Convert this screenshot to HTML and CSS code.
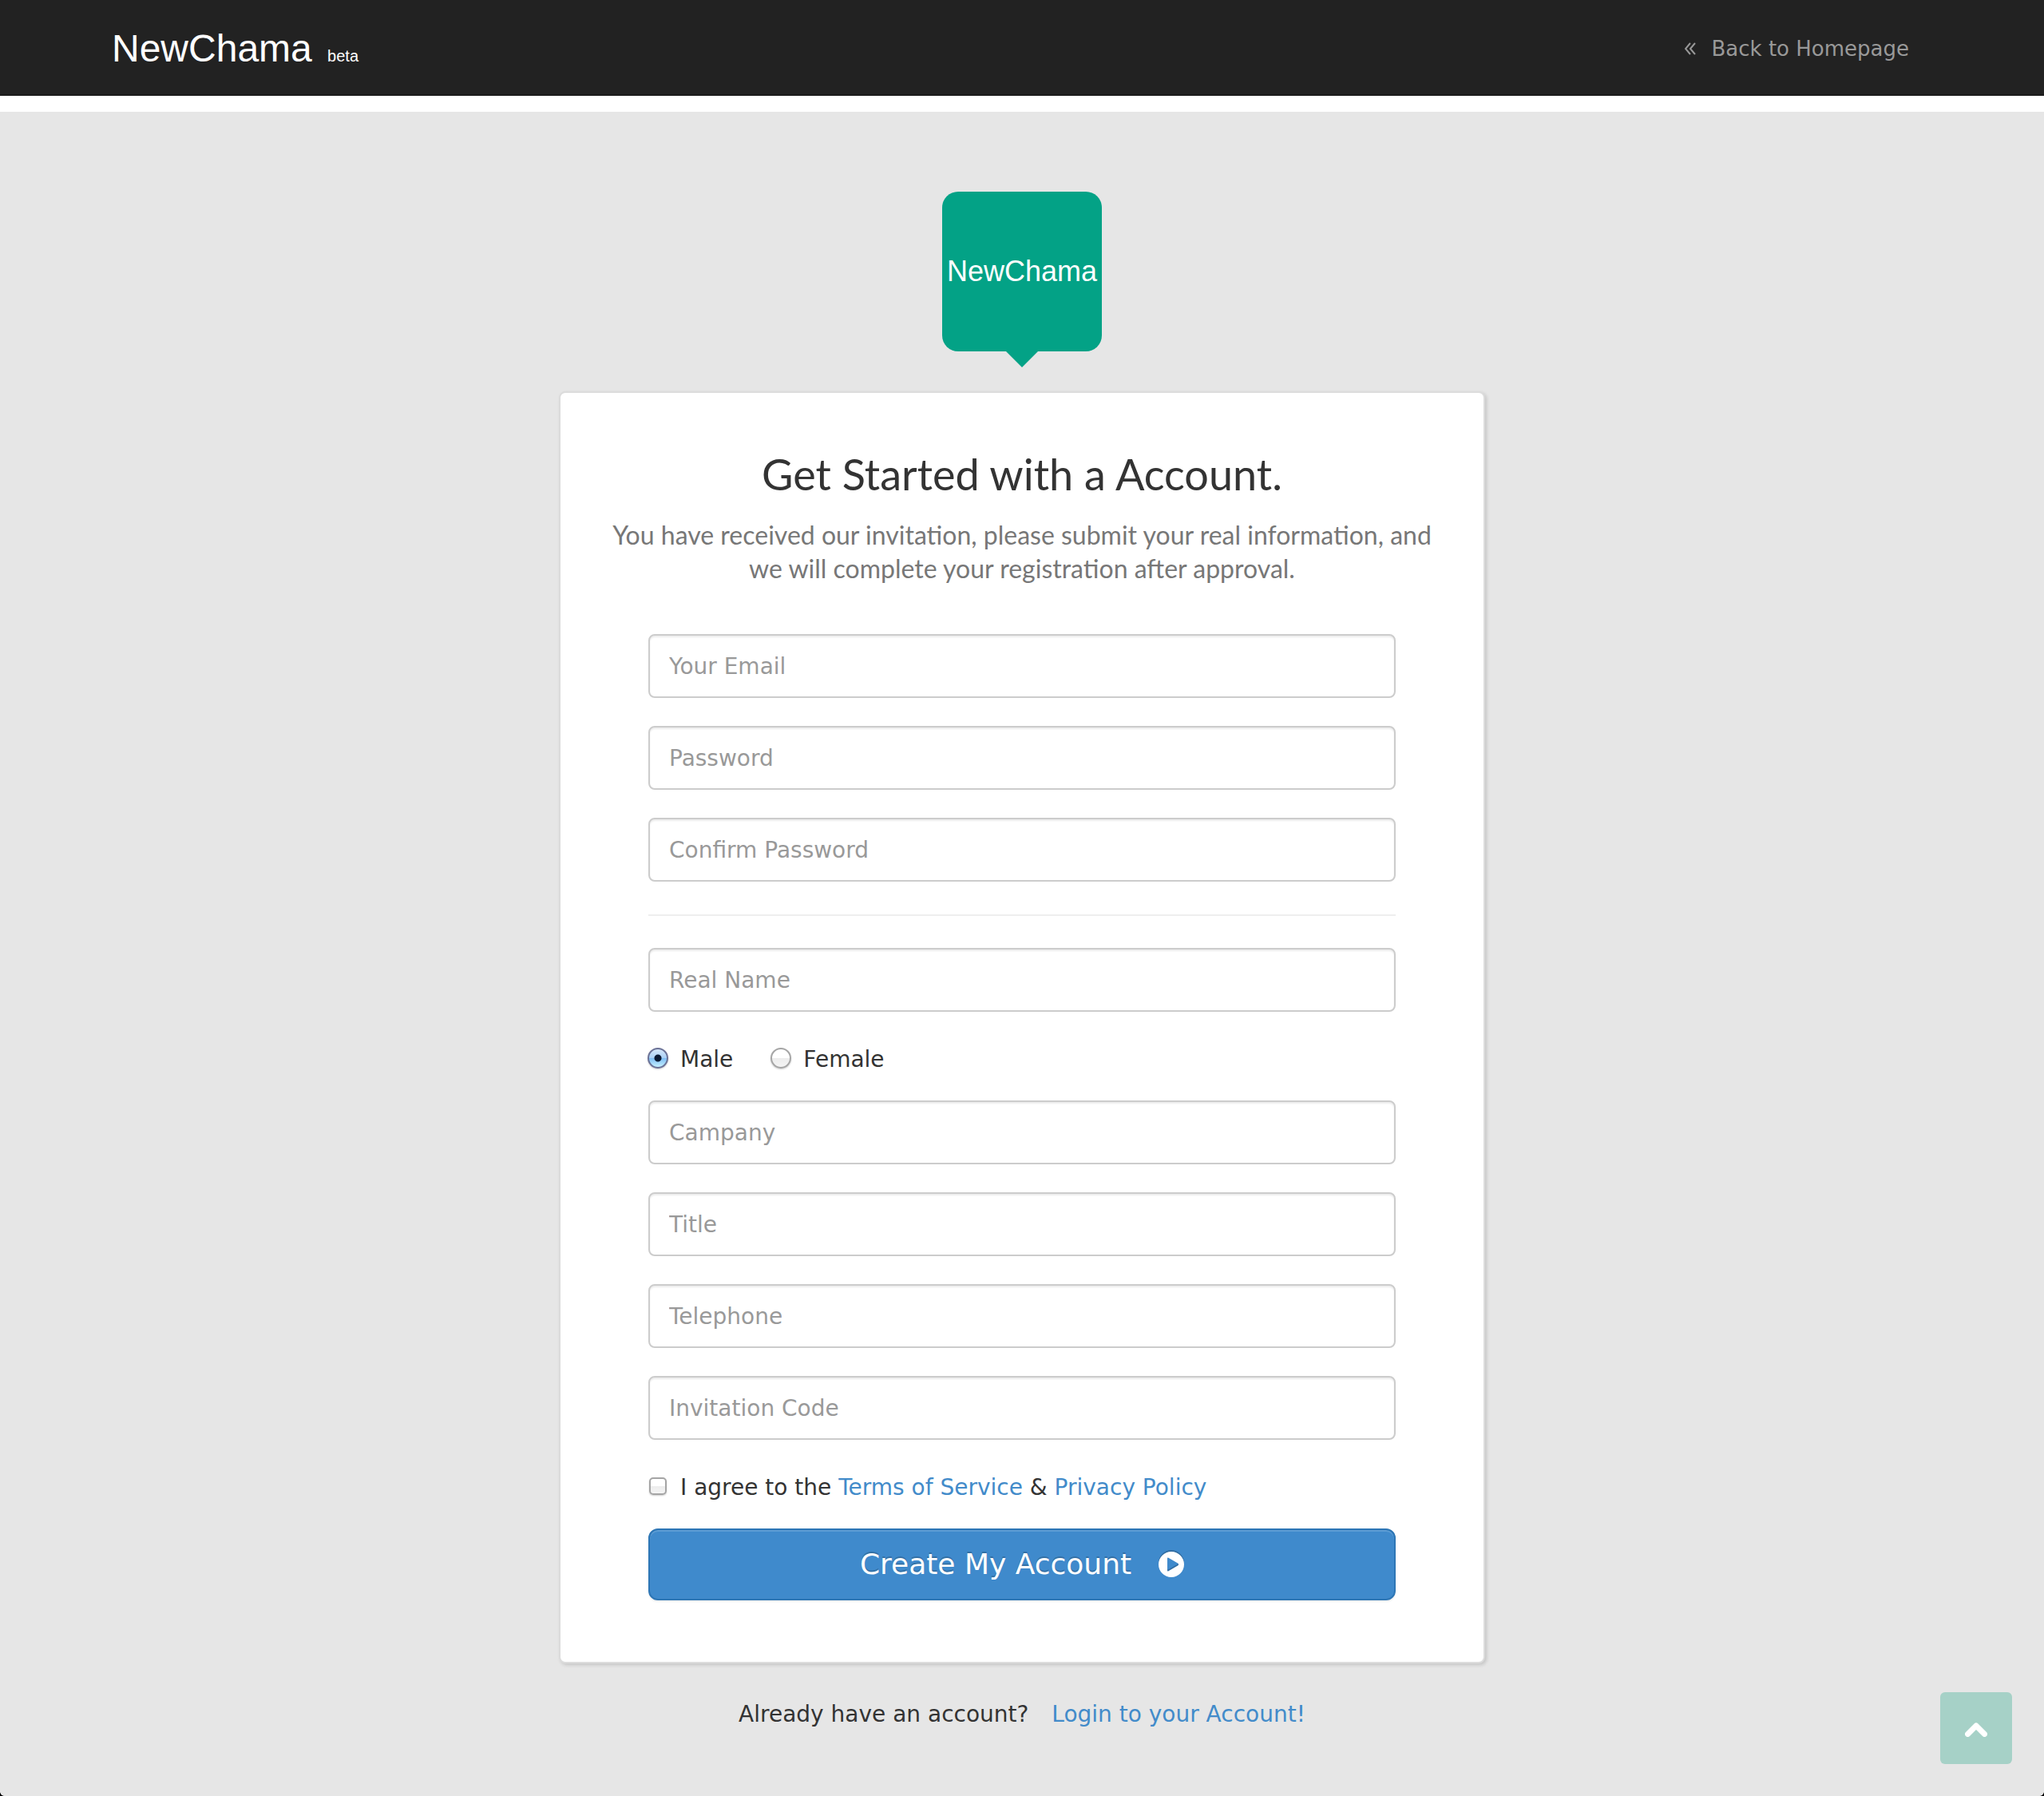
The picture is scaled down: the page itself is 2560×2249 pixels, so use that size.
FILE: index.html
```html
<!DOCTYPE html>
<html lang="en">
<head>
<meta charset="utf-8">
<title>NewChama - Sign up</title>
<link rel="stylesheet" href="styles.css">
</head>
<body>
<header class="navbar">
  <a class="brand" href="#">NewChama <span class="brand-tag">beta</span></a>
  <a class="back-link" href="#">
    <svg class="back-icon" viewBox="0 0 14 16" aria-hidden="true"><path d="M7 1 1 8l6 7M13 1 7 8l6 7"/></svg>
    Back to Homepage
  </a>
</header>
<main class="page">
  <div class="badge">NewChama</div>
  <section class="card">
    <h1 class="card-title">Get Started with a Account.</h1>
    <p class="card-intro">You have received our invitation, please submit your real information, and we will complete your registration after approval.</p>
    <form class="signup">
      <input class="field" type="email" placeholder="Your Email" aria-label="Your Email">
      <input class="field" type="password" placeholder="Password" aria-label="Password">
      <input class="field" type="password" placeholder="Confirm Password" aria-label="Confirm Password">
      <hr class="divider">
      <input class="field" type="text" placeholder="Real Name" aria-label="Real Name">
      <div class="choices">
        <label class="choice"><input class="radio" type="radio" name="gender" checked>Male</label>
        <label class="choice"><input class="radio" type="radio" name="gender">Female</label>
      </div>
      <input class="field" type="text" placeholder="Campany" aria-label="Campany">
      <input class="field" type="text" placeholder="Title" aria-label="Title">
      <input class="field" type="tel" placeholder="Telephone" aria-label="Telephone">
      <input class="field" type="text" placeholder="Invitation Code" aria-label="Invitation Code">
      <div class="choices">
        <label class="choice"><input class="checkbox" type="checkbox"><span>I agree to the <a href="#">Terms of Service</a> &amp; <a href="#">Privacy Policy</a></span></label>
      </div>
      <button class="submit" type="submit">
        Create My Account
        <svg class="submit-icon" viewBox="0 0 32 32" aria-hidden="true"><path fill-rule="evenodd" d="M16 0a16 16 0 1 0 0 32 16 16 0 0 0 0-32zM11 8.500q0-1.500 1.500-.7l12 7q1.400 1.200 0 2.400l-12 7q-1.500.8-1.500-.7z"/></svg>
      </button>
    </form>
  </section>
  <p class="login">Already have an account? <a class="login-link" href="#">Login to your Account!</a></p>
</main>
<button class="to-top" type="button" aria-label="Back to top">
  <svg class="to-top-icon" viewBox="0 0 28 18" aria-hidden="true"><path d="M3.500 14.500 14 4l10.500 10.500"/></svg>
</button>
</body>
</html>
```
FILE: styles.css
```css
* {
  box-sizing: border-box;
}

html {
  background: #000;
}

body {
  margin: 0;
  min-height: 100vh;
  display: flex;
  flex-direction: column;
  background: #fff;
  border-radius: 0 0 6px 6px;
  overflow: hidden;
  color: #333;
  font: 28px/40px "DejaVu Sans", Verdana, sans-serif;
}

a {
  color: #428bca;
  text-decoration: none;
}

.navbar {
  display: flex;
  align-items: center;
  justify-content: space-between;
  height: 120px;
  padding: 4px 169px 0 140px;
  background: #222;
  border-bottom: 2px solid #1b1b1b;
}

.brand {
  padding-top: 8px;
  color: #fff;
  font: 48px/56px "Liberation Sans", Arial, sans-serif;
}

.brand-tag {
  margin-left: 6px;
  font-size: 20px;
}

.back-link {
  display: flex;
  align-items: center;
  gap: 20px;
  color: #999;
  font-size: 26px;
}

.back-icon {
  width: 14px;
  height: 16px;
  fill: none;
  stroke: currentColor;
  stroke-width: 2;
}

.page {
  flex: 1;
  margin-top: 20px;
  padding: 100px 20px 80px;
  background: #e6e6e6;
  border-radius: 0 0 6px 6px;
}

.badge {
  position: relative;
  width: 200px;
  margin: 0 auto 50px;
  border-radius: 20px;
  background: #03a286;
  color: #fff;
  font: 36px/200px "Liberation Sans", Arial, sans-serif;
  text-align: center;
}

.badge::after {
  content: "";
  position: absolute;
  top: 100%;
  left: 50%;
  margin-left: -20px;
  border: 20px solid transparent;
  border-top-color: #03a286;
  border-bottom-width: 0;
}

.card {
  max-width: 1160px;
  margin: 0 auto;
  padding: 72px 0 77px;
  background: #fff;
  border: 2px solid #dcdcdc;
  border-radius: 8px;
  box-shadow: 2px 2px 4px rgba(0, 0, 0, 0.15);
}

.card-title {
  margin: 0 0 25px;
  font: 400 54px/60px Lato, "Century Gothic", sans-serif;
  text-align: center;
}

.card-intro {
  margin: 0 50px 61px;
  color: #777;
  font: 32px/42px Lato, "Century Gothic", sans-serif;
  text-align: center;
}

.signup {
  display: flex;
  flex-direction: column;
  margin: 0 110px;
}

.field {
  height: 80px;
  margin: 0 0 35px;
  padding: 0 24px;
  border: 2px solid #ccc;
  border-radius: 8px;
  background: #fff;
  box-shadow: inset 0 2px 2px rgba(0, 0, 0, 0.08);
  color: #555;
  font: inherit;
}

.field::placeholder {
  color: #999;
  opacity: 1;
}

.divider {
  width: 100%;
  margin: 6px 0 40px;
  border: 0;
  border-top: 2px solid #eee;
}

.choices {
  display: flex;
  gap: 48px;
  padding-top: 5px;
  margin-bottom: 31px;
}

.choice {
  display: flex;
  align-items: center;
}

.radio,
.checkbox {
  appearance: none;
  flex: none;
  border: 2px solid #a5a5a5;
  background: linear-gradient(#fff 50%, #ececec 50%, #f4f4f4);
  box-shadow: 0 1px 2px rgba(0, 0, 0, 0.2);
}

.radio {
  width: 26px;
  height: 26px;
  margin: 0 15px 4px -1px;
  border-radius: 50%;
}

.radio:checked {
  border-color: #6a7196;
  background:
    radial-gradient(circle, #0b1a33 4px, transparent 5px),
    linear-gradient(#d5e7f9, #a9d0f5 50%, #7dbcf3 50%, #c4f0ff);
}

.checkbox {
  width: 22px;
  height: 22px;
  margin: 0 17px 4px 1px;
  border-radius: 5px;
}

.submit {
  display: flex;
  align-items: center;
  justify-content: center;
  gap: 34px;
  height: 90px;
  padding: 0;
  border: 2px solid #2d76b5;
  border-radius: 12px;
  background: #3f8acc;
  box-shadow: inset 0 2px 0 rgba(255, 255, 255, 0.15), 0 2px 2px rgba(0, 0, 0, 0.06);
  color: #fff;
  font: inherit;
  font-size: 36px;
  text-shadow: 0 -2px 0 rgba(0, 0, 0, 0.2);
}

.submit-icon {
  width: 32px;
  height: 32px;
  fill: #fff;
  filter: drop-shadow(0 -2px 0 rgba(0, 0, 0, 0.2));
}

.login {
  margin: 44px 0 0;
  text-align: center;
}

.login-link {
  margin-left: 20px;
}

.to-top {
  position: fixed;
  right: 40px;
  bottom: 40px;
  display: flex;
  align-items: center;
  justify-content: center;
  width: 90px;
  height: 90px;
  padding: 4px 0 0;
  border: 0;
  border-radius: 6px;
  background: #a6d1c7;
}

.to-top-icon {
  width: 28px;
  height: 18px;
  fill: none;
  stroke: #fff;
  stroke-width: 7;
  stroke-linecap: round;
  stroke-linejoin: round;
}
```
